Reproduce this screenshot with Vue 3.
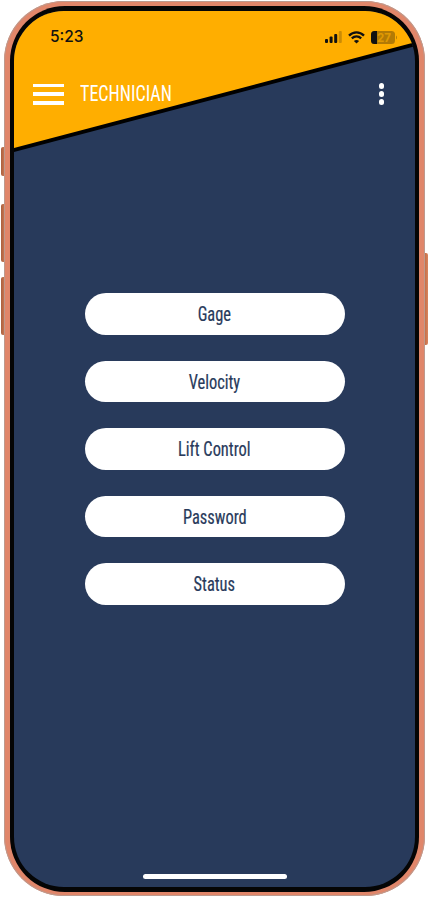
<template>
  <div class="device">
    <span class="side-key key-a"></span>
    <span class="side-key key-b"></span>
    <span class="side-key key-c"></span>
    <span class="side-key key-power"></span>

    <div class="phone">
      <div class="bezel">
        <main class="screen">
          <svg class="wedge" viewBox="0 0 402 160" width="402" height="160" aria-hidden="true">
            <polygon points="0,0 402,0 402,32 0,138" fill="#ffae00" />
            <line x1="-4" y1="140" x2="406" y2="32" stroke="#000" stroke-width="3.9" />
          </svg>

          <div class="status-bar">
            <span class="time">5:23</span>
            <div class="status-icons">
              <svg width="17" height="12" viewBox="0 0 17 12">
                <rect x="0" y="8" width="3" height="4" rx="1" fill="#111" />
                <rect x="4.6" y="5.6" width="3" height="6.4" rx="1" fill="#111" />
                <rect x="9.2" y="3" width="3" height="9" rx="1" fill="#111" />
                <rect x="13.8" y="0" width="3" height="12" rx="1" fill="#111" opacity="0.22" />
              </svg>
              <svg width="17" height="13" viewBox="0 0 17 13" fill="none" stroke="#111" stroke-width="2.3">
                <path d="M1 4.6C5.4 .2 11.6 .2 16 4.6" />
                <path d="M3.8 7.4C6.6 4.8 10.4 4.8 13.2 7.4" />
                <path d="M8.5 12.6L5.9 9.9C7.4 8.6 9.6 8.6 11.1 9.9Z" fill="#111" stroke="none" />
              </svg>
              <svg class="battery" width="26" height="13" viewBox="0 0 26 13">
                <rect x="0" y="0" width="24" height="13" rx="3.5" fill="#111" opacity="0.32" />
                <path d="M3.5 0H6V13H3.5A3.5 3.5 0 0 1 0 9.5V3.5A3.5 3.5 0 0 1 3.5 0Z" fill="#111" />
                <path d="M25 4.5C25.8 5 26 5.6 26 6.5S25.8 8 25 8.5Z" fill="#111" opacity="0.3" />
                <text x="13" y="10.6" text-anchor="middle" class="battery-text">27</text>
              </svg>
            </div>
          </div>

          <header class="app-bar">
            <button class="menu-btn" type="button" aria-label="Menu">
              <span></span><span></span><span></span>
            </button>
            <h1 class="title"><span>TECHNICIAN</span></h1>
            <button class="more-btn" type="button" aria-label="More">
              <span></span><span></span><span></span>
            </button>
          </header>

          <nav class="menu-list">
            <button v-for="item in items" :key="item" class="menu-item" type="button">
              <span>{{ item }}</span>
            </button>
          </nav>

          <div class="home-bar"></div>
        </main>
      </div>
    </div>
  </div>
</template>

<script setup>
const items = ['Gage', 'Velocity', 'Lift Control', 'Password', 'Status']
</script>

<style>
html,
body {
  background: #fff;
  margin: 0;
}
</style>

<style scoped>
.device {
  box-sizing: border-box;
  height: 898px;
  overflow: hidden;
  padding: 1px 5px 0 4px;
  position: relative;
  width: 430px;
}

.side-key {
  background: linear-gradient(90deg, #a9603f, #d07a55);
  position: absolute;
}

.key-a,
.key-b,
.key-c {
  border-radius: 2px 0 0 2px;
  left: 1px;
  width: 4px;
}

.key-a {
  height: 29px;
  top: 147px;
}

.key-b {
  height: 58px;
  top: 204px;
}

.key-c {
  height: 58px;
  top: 277px;
}

.key-power {
  background: linear-gradient(90deg, #bd6842, #d9855f);
  border-radius: 0 2px 2px 0;
  height: 92px;
  left: 424px;
  top: 253px;
  width: 4px;
}

.phone {
  background: #e0866a;
  border-radius: 60px;
  box-shadow: inset 0 0 0 1px #bd9a8e;
  box-sizing: border-box;
  height: 895px;
  padding: 5px 6px 4px;
  position: relative;
  width: 421px;
}

.bezel {
  background: #050505;
  border-radius: 55px;
  box-sizing: border-box;
  height: 886px;
  padding: 5px 4px;
}

.screen {
  background: #283a5b;
  border-radius: 50px;
  font-family: "Liberation Sans Narrow", "Roboto Condensed", "Liberation Sans", sans-serif;
  height: 876px;
  overflow: hidden;
  position: relative;
  width: 401px;
}

.wedge {
  left: 0;
  position: absolute;
  top: 0;
}

.status-bar {
  align-items: center;
  display: flex;
  justify-content: space-between;
  padding: 18px 18px 0 36px;
  position: relative;
}

.time {
  color: #111;
  font-family: Inter, "Liberation Sans", sans-serif;
  font-size: 15.5px;
  font-weight: 500;
  line-height: 16px;
}

.status-icons {
  align-items: center;
  display: flex;
  gap: 6px;
}

.battery-text {
  fill: #ffae00;
  font-family: Inter, "Liberation Sans", sans-serif;
  font-size: 11.5px;
  font-weight: 700;
  opacity: 0.6;
}

.app-bar {
  align-items: center;
  display: flex;
  margin-top: 36px;
  padding: 0 31px 0 19px;
  position: relative;
}

.menu-btn {
  background: none;
  border: 0;
  display: grid;
  gap: 5.25px;
  margin-right: 16px;
  padding: 0;
  width: 31px;
}

.menu-btn span {
  background: #fff;
  display: block;
  height: 3.5px;
}

.title {
  color: #fff;
  flex: 1;
  font-size: 22px;
  font-weight: 400;
  line-height: 26px;
  margin: 0;
}

.title span {
  display: inline-block;
  transform: scaleX(0.82);
  transform-origin: left center;
}

.more-btn {
  background: none;
  border: 0;
  display: grid;
  gap: 2.6px;
  padding: 0;
  width: 5.4px;
}

.more-btn span {
  background: #fff;
  border-radius: 50%;
  display: block;
  height: 5.4px;
}

.menu-list {
  align-items: center;
  display: flex;
  flex-direction: column;
  gap: 26px;
  padding-top: 186px;
  position: relative;
}

.menu-item {
  background: #fff;
  border: 0;
  border-radius: 21px;
  color: #283a5b;
  font-family: inherit;
  font-size: 20px;
  font-weight: 400;
  height: 41.5px;
  padding: 1px 0 0;
  width: 260px;
  -webkit-text-stroke: 0.2px #283a5b;
}

.menu-item span {
  display: inline-block;
  transform: scaleX(0.82);
}

.home-bar {
  background: #fff;
  border-radius: 3px;
  bottom: 8px;
  height: 5px;
  left: 129px;
  position: absolute;
  width: 144px;
}
</style>
